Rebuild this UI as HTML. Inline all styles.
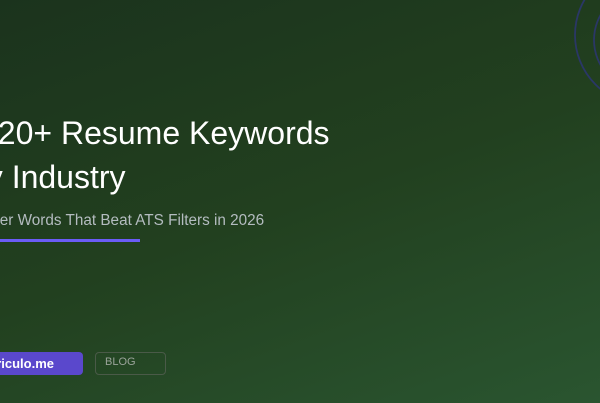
<!DOCTYPE html>
<html><head><style>
body{margin:0;width:600px;height:403px;overflow:hidden;position:relative;font-family:"Liberation Sans",sans-serif;
background:linear-gradient(160deg,#1b331d 0%,#22401f 50%,#2a5530 100%);}
.t{position:absolute;color:#fff;font-size:32px;white-space:nowrap;line-height:1}
.s{position:absolute;color:#b4bcc0;font-size:15.3px;white-space:nowrap;line-height:1}
</style></head><body>
<svg style="position:absolute;left:0;top:0" width="600" height="403">
<circle cx="645" cy="35" r="70" fill="none" stroke="#2a3766" stroke-width="1.8"/>
<circle cx="645" cy="40" r="51" fill="none" stroke="#2a3766" stroke-width="1.8"/>
</svg>
<div class="t" style="left:-20px;top:117px">120+ Resume Keywords</div>
<div class="t" style="left:-31px;top:161px">by Industry</div>
<div class="s" style="left:-30px;top:213px">Power Words That Beat ATS Filters in 2026</div>
<div style="position:absolute;left:0;top:239px;width:140px;height:3px;background:#6b5cf6"></div>
<div style="position:absolute;left:-60px;top:352px;width:143px;height:23px;background:#5a48cc;border-radius:4px;color:#fff;font-weight:bold;font-size:13px;line-height:23px;text-align:right;box-sizing:border-box;padding-right:29px">Curriculo.me</div>
<div style="position:absolute;left:95px;top:352px;width:71px;height:23px;border:1px solid #4a5a48;border-radius:4px;box-sizing:border-box;color:#9aa39a;font-size:11px;padding:3px 0 0 9px">BLOG</div>
</body></html>
